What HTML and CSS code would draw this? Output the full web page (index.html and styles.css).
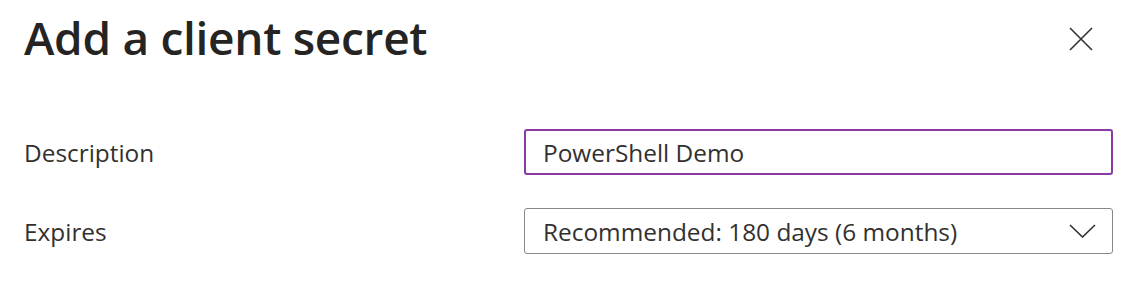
FILE: index.html
```html
<!DOCTYPE html>
<html>
<head>
<meta charset="utf-8">
<link rel="stylesheet" href="styles.css">
</head>
<body>
<div class="panel">
  <div class="header">
    <h1 class="title">Add a client secret</h1>
    <button class="close" aria-label="Close">
      <svg width="24" height="24" viewBox="0 0 24 24"><path d="M1 1L23 23M23 1L1 23" stroke="#323130" stroke-width="1.6" fill="none"/></svg>
    </button>
  </div>
  <div class="form">
    <div class="row">
      <label class="label">Description</label>
      <div class="field field-active">PowerShell Demo</div>
    </div>
    <div class="row">
      <label class="label">Expires</label>
      <div class="field field-select">
        <span>Recommended: 180 days (6 months)</span>
        <svg class="chev" width="27" height="14" viewBox="0 0 27 14"><path d="M1 1L13.5 13L26 1" stroke="#323130" stroke-width="1.6" fill="none"/></svg>
      </div>
    </div>
  </div>
</div>
</body>
</html>
```
FILE: styles.css
```css
html, body {
  margin: 0;
  padding: 0;
  background: #ffffff;
}
body {
  font-family: "Open Sans", "Noto Sans", sans-serif;
  color: #323130;
}
.panel {
  padding: 0 21px 0 24px;
}
.header {
  display: flex;
  justify-content: space-between;
  align-items: center;
  height: 78px;
}
.title {
  margin: 0 0 4px;
  font-size: 46px;
  font-weight: 600;
  color: #252423;
  letter-spacing: -0.3px;
}
.close {
  border: 0;
  background: none;
  padding: 0;
  margin-right: 20px;
  width: 24px;
  height: 24px;
  display: flex;
}
.form {
  display: flex;
  flex-direction: column;
  gap: 33px;
  padding-top: 51px;
}
.row {
  display: flex;
  align-items: center;
  height: 46px;
}
.label {
  width: 500px;
  font-size: 24.4px;
  flex: none;
}
.field {
  flex: 1;
  height: 46px;
  box-sizing: border-box;
  border-radius: 3px;
  display: flex;
  align-items: center;
  padding: 0 16px 0 17px;
  font-size: 24.4px;
  color: #323130;
}
.field-active {
  border: 2px solid #8a3aa5;
}
.field-select {
  border: 1.5px solid #8a8886;
  justify-content: space-between;
  padding-left: 18px;
}
.chev {
  display: block;
}
```
